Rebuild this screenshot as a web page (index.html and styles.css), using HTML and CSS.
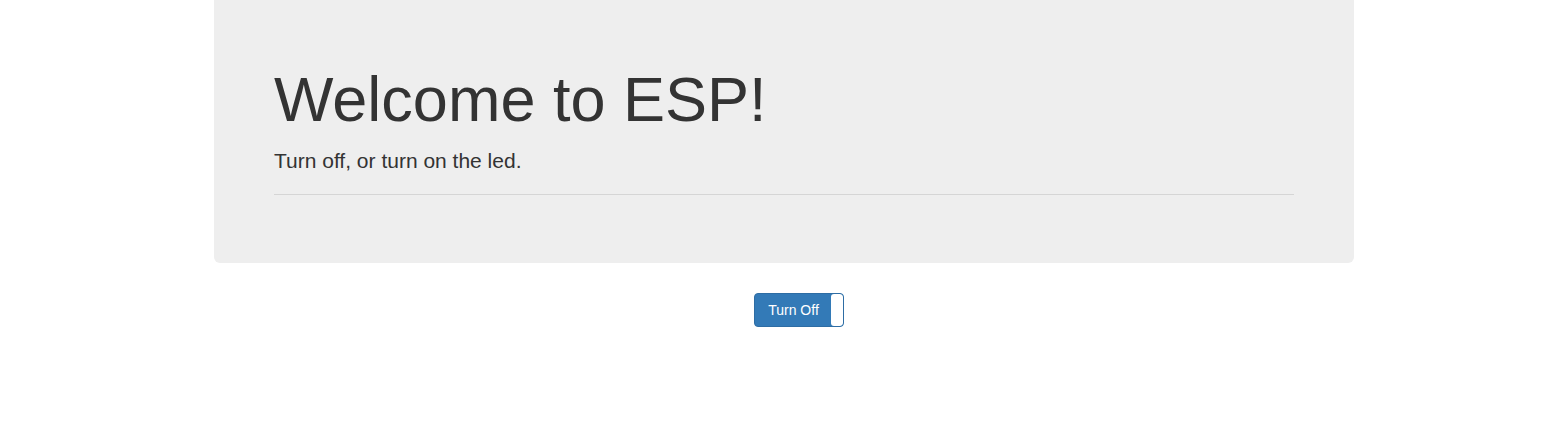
FILE: index.html
```html
<!DOCTYPE html>
<html>
<head>
<meta charset="utf-8">
<link rel="stylesheet" href="styles.css">
</head>
<body>
<div class="container">
  <div class="jumbotron">
    <h1>Welcome to ESP!</h1>
    <p>Turn off, or turn on the led.</p>
    <hr>
  </div>
  <div class="controls">
    <span class="toggle">
      <span class="toggle-label">Turn Off</span>
      <span class="toggle-handle"></span>
    </span>
  </div>
</div>
</body>
</html>
```
FILE: styles.css
```css
* { box-sizing: border-box; }
html, body { margin: 0; padding: 0; background: #fff; }
body {
  padding-left: 2px;
  font-family: "Liberation Sans", Arial, Helvetica, sans-serif;
  font-size: 14px;
  line-height: 1.42857;
  color: #333;
}
.container {
  width: 1170px;
  margin: 0 auto;
  padding: 0 15px;
}
.jumbotron {
  background: #eee;
  border-radius: 0 0 6px 6px;
  padding: 45px 60px 48px;
  margin-bottom: 30px;
}
.jumbotron h1 {
  margin: 20px 0 12px;
  font-size: 63px;
  font-weight: 500;
  line-height: 1.1;
}
.jumbotron p {
  margin: 0;
  font-size: 21px;
  font-weight: 200;
  line-height: 30px;
}
.jumbotron hr {
  margin: 18px 0 20px;
  border: 0;
  border-top: 1px solid #d5d5d5;
  height: 0;
}
.controls {
  display: flex;
  padding-left: 540px;
}
.toggle {
  display: flex;
  align-items: stretch;
  width: 90px;
  height: 34px;
  background: #337ab7;
  border: 1px solid #2e6da4;
  border-radius: 4px;
  overflow: hidden;
}
.toggle-label {
  flex: 1;
  display: flex;
  align-items: center;
  justify-content: center;
  color: #fff;
  font-size: 14px;
  padding: 2px 0 0 1px;
}
.toggle-handle {
  width: 12px;
  background: #fff;
  border-radius: 3px;
}
```
